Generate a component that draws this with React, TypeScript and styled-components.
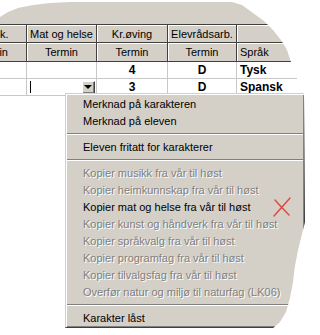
import React from 'react';
import styled, {createGlobalStyle} from 'styled-components';

const GlobalStyle = createGlobalStyle`
  body {
    margin: 0;
    background: #ffffff;
  }
`;

const face = '#d4d0c8';

const Frame = styled.div`
  position: relative;
  width: 307px;
  height: 335px;
  overflow: hidden;
  background: #ffffff;
  font-family: "Liberation Sans", Arial, sans-serif;
  font-size: 11px;
  color: #000000;
  clip-path: polygon(
    0 17px, 8px 12px, 18px 8px, 33px 5px, 50px 3px, 70px 2px, 232px 2px,
    242px 5px, 253px 13px, 264px 21px, 273px 30px, 281px 40px, 287px 50px,
    291px 62px, 297px 62px, 297px 93px, 304px 93px, 305px 222px, 302px 234px,
    298px 250px, 295px 266px, 293px 282px, 290px 298px, 286px 312px,
    280px 322px, 272px 329px, 262px 333px, 250px 335px, 0 335px
  );
`;

const TopBand = styled.div`
  height: 24px;
  background: ${face};
`;

const Grid = styled.div`
  display: grid;
  grid-template-columns: 70px 70px 71px 69px 80px;
  grid-template-rows: 19px 19px 17px 17px;
  margin-left: -43px;
  width: 360px;
`;

const HeadCell = styled.div<{$top?: boolean; $left?: boolean}>`
  box-sizing: border-box;
  display: flex;
  align-items: center;
  justify-content: ${p => (p.$left ? 'flex-start' : 'center')};
  padding-left: ${p => (p.$left ? '3px' : '0')};
  background: ${face};
  border-right: 1px solid #404040;
  border-bottom: 1px solid #404040;
  border-top: ${p => (p.$top ? '1px solid #404040' : '0')};
  box-shadow: inset 1px 1px 0 #ffffff;
  white-space: nowrap;
  overflow: hidden;
`;

const DataCell = styled.div<{$left?: boolean}>`
  box-sizing: border-box;
  position: relative;
  display: flex;
  align-items: center;
  justify-content: ${p => (p.$left ? 'flex-start' : 'center')};
  padding-left: ${p => (p.$left ? '3px' : '0')};
  background: #ffffff;
  border-right: 1px solid #c8c8c8;
  border-bottom: 1px solid #c8c8c8;
  font-size: 12px;
  font-weight: bold;
  white-space: nowrap;
`;

const EditCell = styled(DataCell)`
  justify-content: space-between;
  padding: 0 1px 0 3px;
`;

const Caret = styled.span`
  width: 1px;
  height: 12px;
  background: #000000;
`;

const DropButton = styled.span`
  box-sizing: border-box;
  width: 13px;
  height: 13px;
  display: flex;
  align-items: center;
  justify-content: center;
  background: ${face};
  border-top: 1px solid #ffffff;
  border-left: 1px solid #ffffff;
  border-right: 1px solid #404040;
  border-bottom: 1px solid #404040;
  box-shadow: inset -1px -1px 0 #808080;
`;

const Arrow = styled.span`
  width: 0;
  height: 0;
  border-left: 4px solid transparent;
  border-right: 4px solid transparent;
  border-top: 4px solid #000000;
  margin: 0 1px 1px 0;
`;

const Menu = styled.div`
  position: absolute;
  left: 65px;
  top: 93px;
  width: 240px;
  box-sizing: border-box;
  padding: 1px;
  background: ${face};
  border-top: 1px solid ${face};
  border-left: 1px solid ${face};
  border-right: 1px solid #404040;
  border-bottom: 1px solid #404040;
  box-shadow: inset 1px 1px 0 #ffffff, inset -1px -1px 0 #808080;
`;

const MenuItem = styled.div<{$disabled?: boolean}>`
  height: 17px;
  display: flex;
  align-items: center;
  padding-left: 16px;
  white-space: nowrap;
  color: ${p => (p.$disabled ? '#808080' : '#000000')};
  text-shadow: ${p => (p.$disabled ? '1px 1px 0 #ffffff' : 'none')};
`;

const Separator = styled.div`
  height: 9px;
  display: flex;
  flex-direction: column;
  justify-content: center;

  &::before {
    content: '';
    height: 1px;
    background: #808080;
  }

  &::after {
    content: '';
    height: 1px;
    background: #ffffff;
  }
`;

const Mark = styled.svg`
  position: absolute;
  left: 271px;
  top: 196px;
`;

const copyItems = [
  'Kopier musikk fra vår til høst',
  'Kopier heimkunnskap fra vår til høst',
  'Kopier mat og helse fra vår til høst',
  'Kopier kunst og håndverk fra vår til høst',
  'Kopier språkvalg fra vår til høst',
  'Kopier programfag fra vår til høst',
  'Kopier tilvalgsfag fra vår til høst',
  'Overfør natur og miljø til naturfag (LK06)'
];

const App = () => {
  return <>
    <GlobalStyle/>
    <Frame>
      <TopBand/>
      <Grid>
        <HeadCell $top>Heimk.</HeadCell>
        <HeadCell $top>Mat og helse</HeadCell>
        <HeadCell $top>Kr.øving</HeadCell>
        <HeadCell $top>Elevrådsarb.</HeadCell>
        <HeadCell $top/>

        <HeadCell>Termin</HeadCell>
        <HeadCell>Termin</HeadCell>
        <HeadCell>Termin</HeadCell>
        <HeadCell>Termin</HeadCell>
        <HeadCell $left>Språk</HeadCell>

        <DataCell/>
        <DataCell/>
        <DataCell>4</DataCell>
        <DataCell>D</DataCell>
        <DataCell $left>Tysk</DataCell>

        <DataCell/>
        <EditCell>
          <Caret/>
          <DropButton><Arrow/></DropButton>
        </EditCell>
        <DataCell>3</DataCell>
        <DataCell>D</DataCell>
        <DataCell $left>Spansk</DataCell>
      </Grid>

      <Menu>
        <MenuItem>Merknad på karakteren</MenuItem>
        <MenuItem>Merknad på eleven</MenuItem>
        <Separator/>
        <MenuItem>Eleven fritatt for karakterer</MenuItem>
        <Separator/>
        {copyItems.map(item => <MenuItem key={item} $disabled={item.indexOf('mat og helse') < 0}>
          {item}
        </MenuItem>)}
        <Separator/>
        <MenuItem>Karakter låst</MenuItem>
      </Menu>

      <Mark width="22" height="22" viewBox="0 0 22 22">
        <path d="M19 2 Q12 10 3 20" fill="none" stroke="#e0463c" strokeWidth="1.4" strokeLinecap="round"/>
        <path d="M4 4 Q11 12 18 19" fill="none" stroke="#e0463c" strokeWidth="1.4" strokeLinecap="round"/>
      </Mark>
    </Frame>
  </>;
};

export default App;
